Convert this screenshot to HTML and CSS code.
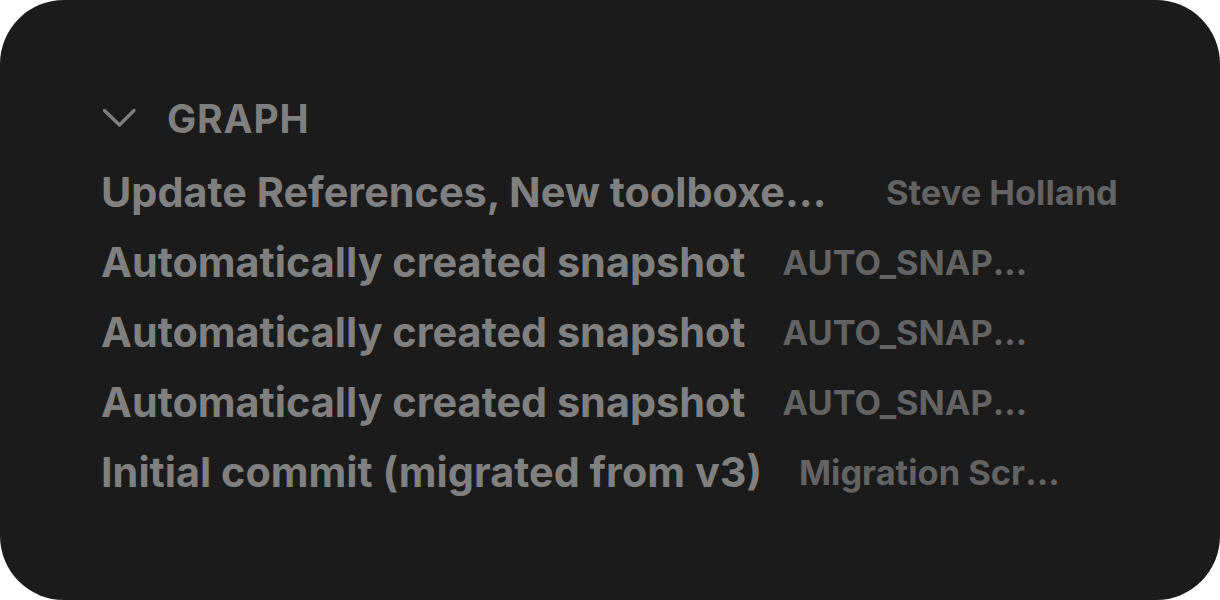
FILE: index.html
```html
<!DOCTYPE html>
<html>
<head>
<meta charset="utf-8">
<link rel="stylesheet" href="styles.css">
</head>
<body>
<div class="card">
  <div class="header">
    <svg class="chev" width="36" height="20" viewBox="0 0 36 20"><path d="M3.5 2.5 L18.5 17 L33 2.5" fill="none" stroke="#7f7f7f" stroke-width="3.4" stroke-linecap="round" stroke-linejoin="round"/></svg>
    <span class="title">GRAPH</span>
  </div>
  <ul class="list">
    <li class="row"><span class="msg trunc">Update References, New toolboxes and more</span><span class="author">Steve Holland</span></li>
    <li class="row"><span class="msg">Automatically created snapshot</span><span class="author">AUTO_SNAPSHOT</span></li>
    <li class="row"><span class="msg">Automatically created snapshot</span><span class="author">AUTO_SNAPSHOT</span></li>
    <li class="row"><span class="msg">Automatically created snapshot</span><span class="author">AUTO_SNAPSHOT</span></li>
    <li class="row"><span class="msg">Initial commit (migrated from v3)</span><span class="author">Migration Script</span></li>
  </ul>
</div>
</body>
</html>
```
FILE: styles.css
```css
html, body {
  margin: 0;
  padding: 0;
  background: #ffffff;
}
.card {
  width: 1220px;
  height: 600px;
  box-sizing: border-box;
  background: #1b1b1b;
  border-radius: 64px;
  padding: 93px 0 0 101px;
  font-family: Inter, "Noto Sans", sans-serif;
  color: #7f7f7f;
}
.header {
  display: flex;
  align-items: center;
  height: 50px;
  margin-bottom: 14px;
}
.chev {
  margin-right: 30px;
}
.title {
  font-size: 39px;
  font-weight: 700;
  letter-spacing: 0.8px;
  color: #7f7f7f;
}
.list {
  list-style: none;
  margin: 0;
  padding: 0;
}
.row {
  display: flex;
  align-items: center;
  height: 70px;
  white-space: nowrap;
}
.msg {
  font-size: 41.4px;
  font-weight: 700;
  color: #808080;
  margin-right: 37px;
  overflow: hidden;
  text-overflow: ellipsis;
}
.msg.trunc {
  max-width: 748px;
}
.author {
  font-size: 34.4px;
  font-weight: 700;
  color: #636363;
  max-width: 262px;
  overflow: hidden;
  text-overflow: ellipsis;
}
```
